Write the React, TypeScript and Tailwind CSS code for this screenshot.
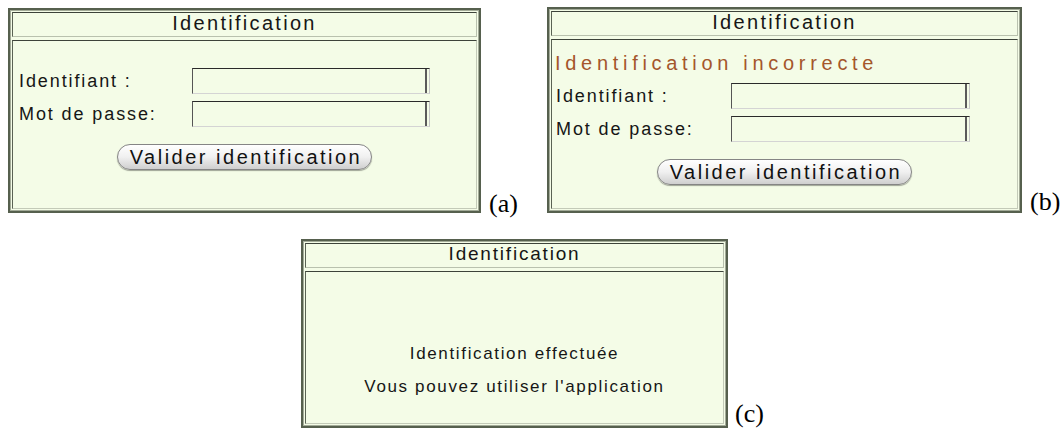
import React from "react";

const BG = "bg-[#f4fce7]";

function Panel({
  w,
  h,
  headerSize,
  children,
}: {
  w: string;
  h: string;
  headerSize: string;
  children: React.ReactNode;
}) {
  return (
    <div
      className={`${w} ${h} ${BG} border-2 border-[#56604e] p-[2px] flex flex-col gap-[3px] shadow-[inset_0_0_0_1px_#a3ab98]`}
    >
      <div
        className={`h-[25px] shrink-0 border-t border-l border-t-[#3d433a] border-l-[#5a6254] border-b border-r border-b-[#b9c1ae] border-r-[#b9c1ae] flex items-center justify-center pb-[3px] ${headerSize} text-[#161616]`}
      >
        Identification
      </div>
      <div className="flex-1 border-t border-l border-t-[#3d433a] border-l-[#5a6254] border-b border-r border-b-[#c3cab8] border-r-[#c3cab8] flex flex-col">
        {children}
      </div>
    </div>
  );
}

function Input({ w }: { w: string }) {
  return (
    <div
      className={`${w} h-[26px] border border-t-[#2a2a2a] border-l-[#555] border-b-[#d4d4d4] border-r-[#c4c4c4] shadow-[inset_-2px_0_0_#f4fce7,inset_-4px_0_0_#5a5a5a]`}
    />
  );
}

function Button() {
  return (
    <div className="w-[255px] h-[26px] rounded-full border border-[#858585] bg-gradient-to-b from-[#ffffff] via-[#f0f0f0] to-[#cfcfcf] shadow-[0_1px_1px_rgba(0,0,0,0.35)] flex items-center justify-center text-[20px] tracking-[2.5px] text-[#111] leading-none pl-[3px]">
      Valider identification
    </div>
  );
}

function Label({ children }: { children: React.ReactNode }) {
  return <span className="block font-['Liberation_Serif',serif] text-[26px] leading-[26px] text-black">{children}</span>;
}

export default function App() {
  return (
    <div className="w-[1064px] h-[437px] bg-white font-['Liberation_Sans',Arial,sans-serif] overflow-hidden">
      <div className="flex items-end pt-[7px] pl-[8px]">
        <Panel w="w-[473px]" h="h-[205px]" headerSize="text-[20px] tracking-[2.3px]">
          <div className="flex flex-col pl-[6px] pt-[27px]">
            <div className="flex items-center h-[26px]">
              <span className="w-[173px] text-[18px] tracking-[1.9px] text-[#161616]">Identifiant :</span>
              <Input w="w-[238px]" />
            </div>
            <div className="flex items-center h-[26px] mt-[7px]">
              <span className="w-[173px] text-[18px] tracking-[1.9px] text-[#161616]">Mot de passe:</span>
              <Input w="w-[238px]" />
            </div>
            <div className="flex justify-center mt-[17px] pr-[6px]">
              <Button />
            </div>
          </div>
        </Panel>
        <div className="w-[66px] pl-[8px] mb-[-4px]">
          <Label>(a)</Label>
        </div>
        <Panel w="w-[475px]" h="h-[206px]" headerSize="text-[20px] tracking-[2.3px]">
          <div className="flex flex-col pl-[3px] pt-[12px]">
            <div className="text-[20px] leading-[22px] tracking-[4.7px] text-[#a4562b]">
              Identification incorrecte
            </div>
            <div className="flex items-center h-[26px] mt-[9px]">
              <span className="w-[176px] pl-[1px] text-[18px] tracking-[1.9px] text-[#161616]">Identifiant :</span>
              <Input w="w-[239px]" />
            </div>
            <div className="flex items-center h-[26px] mt-[7px]">
              <span className="w-[176px] pl-[1px] text-[18px] tracking-[1.9px] text-[#161616]">Mot de passe:</span>
              <Input w="w-[239px]" />
            </div>
            <div className="flex justify-center mt-[17px] pr-[3px]">
              <Button />
            </div>
          </div>
        </Panel>
        <div className="pl-[8px] mb-[-2px]">
          <Label>(b)</Label>
        </div>
      </div>
      <div className="flex items-end pl-[301px] mt-[26px]">
        <Panel w="w-[427px]" h="h-[189px]" headerSize="text-[19px] tracking-[1.8px]">
          <div className="flex flex-col items-center pt-[72px] text-[17px] leading-[20px] tracking-[1.65px] text-[#161616]">
            <div>Identification effectuée</div>
            <div className="mt-[13px]">Vous pouvez utiliser l'application</div>
          </div>
        </Panel>
        <div className="pl-[7px] mb-[1px]">
          <Label>(c)</Label>
        </div>
      </div>
    </div>
  );
}
